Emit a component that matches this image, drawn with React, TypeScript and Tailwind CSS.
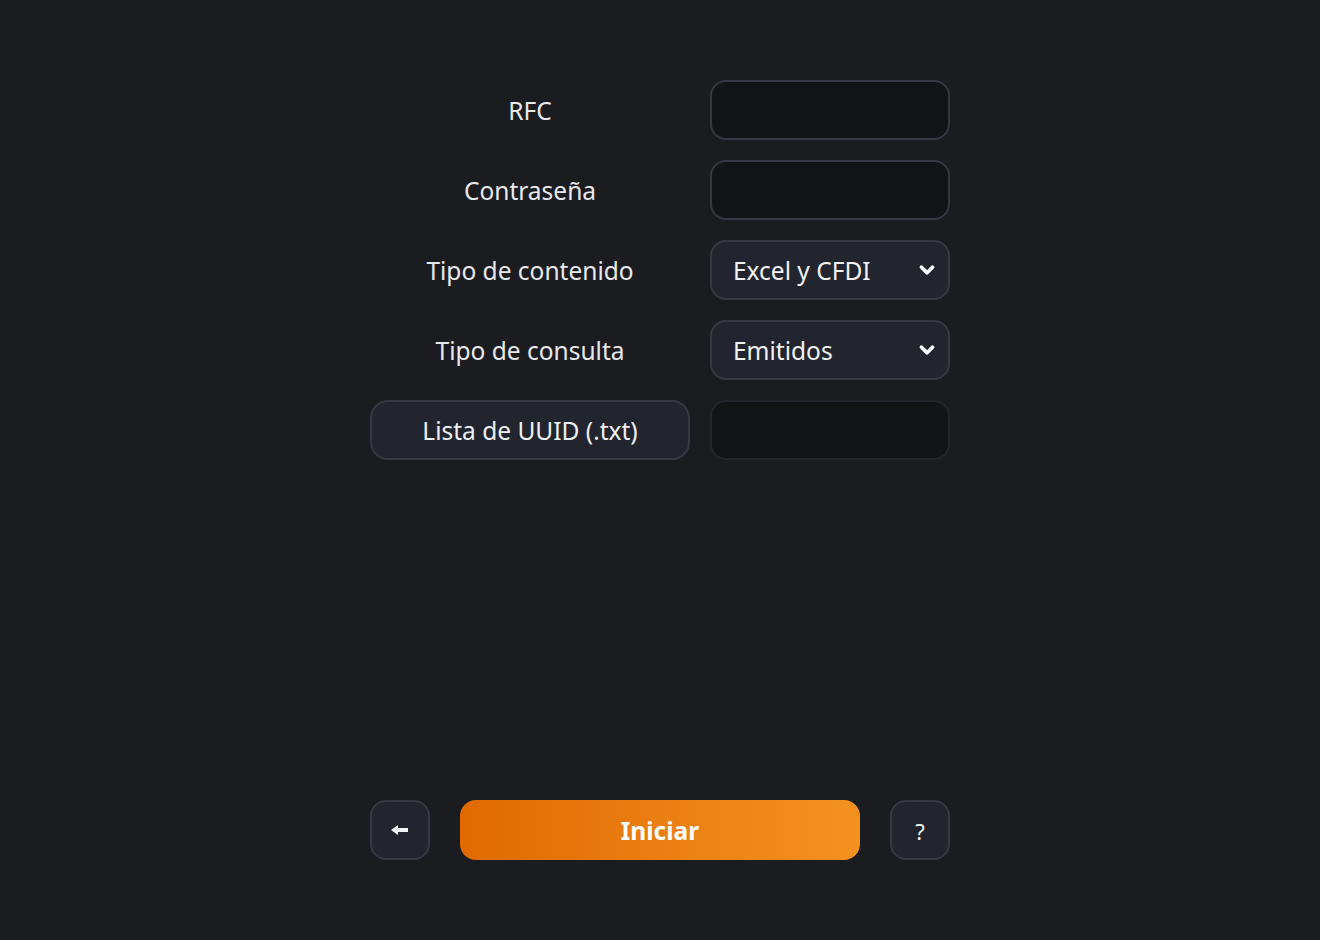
import { ChevronDown } from 'lucide-react';

const labelCls = "h-[60px] flex items-center justify-center pt-[3px] text-[24.5px] text-[#e8e9ec]";
const inputCls = "h-[60px] w-full rounded-[16px] border-2 border-[#363944] bg-[#131418] outline-none px-5 text-[24px] text-white";

function SelectBox({ value }: { value: string }) {
  return (
    <div className="h-[60px] w-full rounded-[16px] border-2 border-[#363944] bg-[#22252e] flex items-center justify-between pl-[21px] pr-[10px] text-[24.5px] text-[#f2f2f4]">
      <span className="pt-[3px]">{value}</span>
      <ChevronDown className="w-[22px] h-[22px] text-white" strokeWidth={4.2} />
    </div>
  );
}

export default function App() {
  return (
    <div
      className="min-h-[940px] w-full bg-[#1b1c20] flex flex-col items-center pt-[80px]"
      style={{ fontFamily: '"Noto Sans", "Open Sans", sans-serif' }}
    >
      <div className="w-[580px] grid grid-cols-[320px_240px] gap-x-5 gap-y-5">
        <div className={labelCls}>RFC</div>
        <input className={inputCls} />

        <div className={labelCls}>Contraseña</div>
        <input type="password" className={inputCls} />

        <div className={labelCls}>Tipo de contenido</div>
        <SelectBox value="Excel y CFDI" />

        <div className={labelCls}>Tipo de consulta</div>
        <SelectBox value="Emitidos" />

        <button className="h-[60px] rounded-[18px] border-2 border-[#363944] bg-[#22252e] pt-[3px] text-[24.5px] text-[#eef0f3]">
          Lista de UUID (.txt)
        </button>
        <div className="h-[60px] rounded-[16px] border-2 border-[#24262d] bg-[#131418]" />
      </div>

      <div className="mt-[340px] w-[580px] flex items-center justify-between">
        <button className="h-[60px] w-[60px] rounded-[16px] border-2 border-[#363944] bg-[#22252e] flex items-center justify-center text-white">
          <svg width="18" height="12" viewBox="0 0 18 12" fill="#f2f4f7">
            <path d="M0 6 L7 1 V4 H17 V8 H7 V11 Z" />
          </svg>
        </button>
        <button className="h-[60px] w-[400px] rounded-[16px] bg-gradient-to-r from-[#e06a00] to-[#f5921f] pt-[3px] text-white text-[24.5px] font-bold">
          Iniciar
        </button>
        <button className="h-[60px] w-[60px] rounded-[16px] border-2 border-[#363944] bg-[#22252e] flex items-center justify-center pt-[3px] text-[#eef0f3] text-[22px]">
          ?
        </button>
      </div>
    </div>
  );
}
